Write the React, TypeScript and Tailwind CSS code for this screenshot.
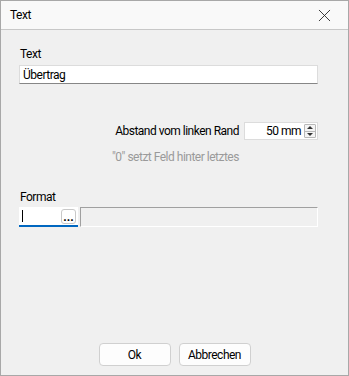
import { X } from 'lucide-react';

export default function App() {
  return (
    <div
      className="w-[349px] h-[376px] flex flex-col border border-[#a8a8a8] bg-[#f0f0f0] text-[12px] text-black tracking-[-0.5px]"
      style={{ fontFamily: 'Roboto, "Liberation Sans", Arial, sans-serif' }}
    >
      {/* Title bar */}
      <div className="h-[29px] shrink-0 flex items-center justify-between bg-[#f9f9f9] border-b border-[#c8c8c8] pl-[9px] pr-[13px]">
        <span className="text-[12px]">Text</span>
        <X size={21} strokeWidth={1} className="text-[#222]" />
      </div>

      {/* Body */}
      <div className="flex-1 flex flex-col px-[18px] pt-[17px]">
        <div className="leading-[14px] pl-[1px]">Text</div>
        <div className="mt-[4px] h-[19px] w-[299px] bg-white border border-[#dcdcdc] border-b-[#868686] flex items-center px-[3px]">
          Übertrag
        </div>

        <div className="mt-[38px] flex items-center justify-end w-[299px] gap-[5px]">
          <span>Abstand vom linken Rand</span>
          <div className="h-[18px] w-[74px] bg-white border border-[#dcdcdc] flex items-center pr-[1px]">
            <span className="flex-1 text-right pr-[3px]">50 mm</span>
            <div className="w-[12px] h-[14px] flex flex-col border border-[#b8b8b8] rounded-[1px] bg-[#f4f4f4]">
              <div className="flex-1 flex items-center justify-center border-b border-[#b8b8b8]">
                <span className="w-0 h-0 border-l-[3px] border-r-[3px] border-b-[3px] border-l-transparent border-r-transparent border-b-[#333]" />
              </div>
              <div className="flex-1 flex items-center justify-center">
                <span className="w-0 h-0 border-l-[3px] border-r-[3px] border-t-[3px] border-l-transparent border-r-transparent border-t-[#333]" />
              </div>
            </div>
          </div>
        </div>
        <div className="mt-[8px] pl-[93px] text-[#9a9a9a]">"0" setzt Feld hinter letztes</div>

        <div className="mt-[24px] leading-[14px] pl-[1px]">Format</div>
        <div className="mt-[3px] flex gap-[2px] w-[299px]">
          <div className="h-[20px] w-[59px] bg-white border-b-2 border-[#0067c0] flex items-center pl-[3px] pr-[2px]">
            <span className="w-px h-[12px] bg-black" />
            <div className="ml-auto h-[15px] w-[15px] border border-[#c8c8c8] rounded-[3px] flex items-end justify-center leading-[11px] text-[12px] font-bold tracking-normal">
              ...
            </div>
          </div>
          <div className="h-[20px] flex-1 bg-[#f0f0f0] border border-white border-t-[#a0a0a0] border-l-[#a0a0a0]" />
        </div>

        <div className="mt-auto mb-[9px] flex justify-center gap-[8px]">
          <button className="h-[23px] w-[72px] rounded-[4px] bg-[#fdfdfd] border border-[#d0d0d0]">Ok</button>
          <button className="h-[23px] w-[72px] rounded-[4px] bg-[#fdfdfd] border border-[#d0d0d0]">Abbrechen</button>
        </div>
      </div>
    </div>
  );
}
